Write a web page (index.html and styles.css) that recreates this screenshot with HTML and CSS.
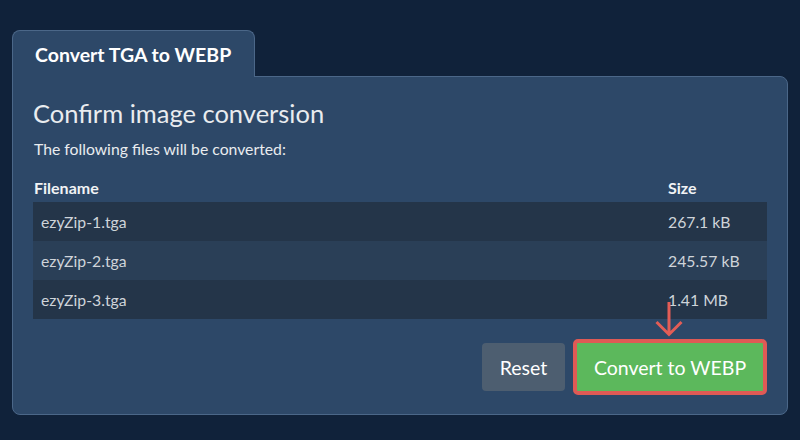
FILE: index.html
```html
<!DOCTYPE html>
<html>
<head>
<meta charset="utf-8">
<link rel="stylesheet" href="styles.css">
</head>
<body>
<div class="wrap">
  <div class="tab">Convert TGA to WEBP</div>
  <div class="panel">
    <h1 class="title">Confirm image conversion</h1>
    <p class="sub">The following files will be converted:</p>
    <table class="files">
      <thead>
        <tr><th class="c-name">Filename</th><th class="c-size">Size</th></tr>
      </thead>
      <tbody>
        <tr><td class="c-name">ezyZip-1.tga</td><td class="c-size">267.1 kB</td></tr>
        <tr><td class="c-name">ezyZip-2.tga</td><td class="c-size">245.57 kB</td></tr>
        <tr><td class="c-name">ezyZip-3.tga</td><td class="c-size">1.41 MB</td></tr>
      </tbody>
    </table>
    <div class="actions">
      <button class="btn btn-reset">Reset</button>
      <div class="hl">
        <svg class="arrow" width="28" height="36" viewBox="0 0 28 36">
          <path d="M14 1 V33.5 M1.5 21 L14 33.5 L26.5 21" fill="none" stroke="#e35d56" stroke-width="3"/>
        </svg>
        <button class="btn btn-go">Convert to WEBP</button>
      </div>
    </div>
  </div>
</div>
</body>
</html>
```
FILE: styles.css
```css
html, body { margin: 0; padding: 0; }
body {
  background: #10223a;
  font-family: Lato, "Noto Sans", sans-serif;
  width: 800px;
  height: 440px;
  overflow: hidden;
}
.wrap {
  padding: 30px 12px 0 12px;
  width: 776px;
}
.tab {
  display: inline-block;
  box-sizing: border-box;
  width: 243px;
  height: 47px;
  padding: 13px 0 0 22px;
  background: #2d4868;
  border: 1px solid #4b6788;
  border-bottom: none;
  border-radius: 8px 8px 0 0;
  color: #ffffff;
  font-weight: 700;
  font-size: 19.5px;
  line-height: 22px;
  position: relative;
  z-index: 1;
  vertical-align: top;
}
.panel {
  box-sizing: border-box;
  margin-top: -1px;
  height: 339px;
  background: #2d4868;
  border: 1px solid #4b6788;
  border-radius: 0 8px 8px 8px;
  padding: 20px 20px 0 20px;
}
.title {
  margin: 0;
  font-weight: 400;
  font-size: 25.5px;
  line-height: 32px;
  color: #e9ecef;
}
.sub {
  margin: 10px 0 0 1px;
  font-size: 15.75px;
  line-height: 20px;
  color: #e9ecef;
}
.files {
  margin-top: 15px;
  width: 734px;
  border-collapse: collapse;
  font-size: 15.75px;
}
.files th {
  text-align: left;
  color: #f1f3f5;
  font-weight: 700;
  font-size: 16px;
  height: 26px;
  padding: 0 0 2px 1px;
  vertical-align: middle;
}
.files td {
  height: 39px;
  padding: 0 0 0 8px;
  color: #cfd4da;
  vertical-align: middle;
}
.files th.c-size, .files td.c-size { width: 99px; padding-left: 0; }
.files tbody tr:nth-child(odd) { background: #243549; }
.files tbody tr:nth-child(even) { background: #2a3f57; }
.actions {
  display: flex;
  justify-content: flex-end;
  align-items: center;
  gap: 8px;
  margin-top: 20px;
  width: 734px;
}
.btn {
  font-family: Lato, "Noto Sans", sans-serif;
  font-size: 19.5px;
  font-weight: 400;
  border: none;
  border-radius: 4px;
  color: #ffffff;
  cursor: pointer;
}
.btn-reset {
  width: 83px;
  height: 48px;
  background: #4d5e70;
}
.hl {
  position: relative;
  border: 4px solid #df5a55;
  border-radius: 5px;
  background: #df5a55;
}
.btn-go {
  display: block;
  width: 186px;
  height: 48px;
  background: #5cb85c;
  border-radius: 1px;
}
.arrow {
  position: absolute;
  left: 78px;
  top: -42px;
}
```
